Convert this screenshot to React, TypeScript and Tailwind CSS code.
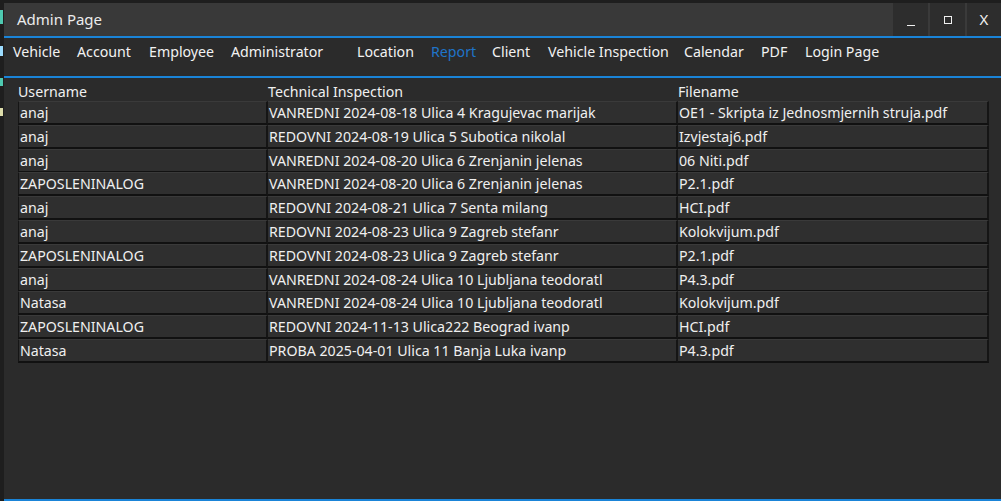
import { useState } from "react";

const navItems = [
  { label: "Vehicle", w: 64 },
  { label: "Account", w: 72 },
  { label: "Employee", w: 82 },
  { label: "Administrator", w: 126 },
  { label: "Location", w: 74 },
  { label: "Report", w: 61 },
  { label: "Client", w: 56 },
  { label: "Vehicle Inspection", w: 136 },
  { label: "Calendar", w: 77 },
  { label: "PDF", w: 44 },
  { label: "Login Page", w: 90 },
];

const rows = [
  ["anaj", "VANREDNI 2024-08-18 Ulica 4 Kragujevac marijak", "OE1 - Skripta iz Jednosmjernih struja.pdf"],
  ["anaj", "REDOVNI 2024-08-19 Ulica 5 Subotica nikolal", "Izvjestaj6.pdf"],
  ["anaj", "VANREDNI 2024-08-20 Ulica 6 Zrenjanin jelenas", "06 Niti.pdf"],
  ["ZAPOSLENINALOG", "VANREDNI 2024-08-20 Ulica 6 Zrenjanin jelenas", "P2.1.pdf"],
  ["anaj", "REDOVNI 2024-08-21 Ulica 7 Senta milang", "HCI.pdf"],
  ["anaj", "REDOVNI 2024-08-23 Ulica 9 Zagreb stefanr", "Kolokvijum.pdf"],
  ["ZAPOSLENINALOG", "REDOVNI 2024-08-23 Ulica 9 Zagreb stefanr", "P2.1.pdf"],
  ["anaj", "VANREDNI 2024-08-24 Ulica 10 Ljubljana teodoratl", "P4.3.pdf"],
  ["Natasa", "VANREDNI 2024-08-24 Ulica 10 Ljubljana teodoratl", "Kolokvijum.pdf"],
  ["ZAPOSLENINALOG", "REDOVNI 2024-11-13 Ulica222 Beograd ivanp", "HCI.pdf"],
  ["Natasa", "PROBA 2025-04-01 Ulica 11 Banja Luka ivanp", "P4.3.pdf"],
];

const cols = "grid-cols-[250px_410px_311px]";

export default function App() {
  const [active, setActive] = useState("Report");
  return (
    <div
      className="flex h-[501px] w-[1001px] overflow-hidden bg-[#1e1e1e] text-[#f0f0f0]"
      style={{ fontFamily: '"Noto Sans", "Open Sans", sans-serif' }}
    >
      {/* editor peeking out behind the window */}
      <div className="flex w-[4px] flex-col gap-[22px] pt-[10px]">
        <div className="h-[14px] w-[3px] bg-[#4ec9b0]" />
        <div className="h-[10px] w-[3px] bg-[#9cdcfe]" />
        <div className="h-[8px] w-[3px] bg-[#4ec9b0]" />
        <div className="h-[8px] w-[3px] bg-[#dcdcaa]" />
      </div>

      <div className="flex flex-1 flex-col pt-[3px]">
        {/* title bar */}
        <div className="flex h-[35px] items-center border-b-2 border-[#1a84d8] bg-[#393939]">
          <span className="flex-1 pl-[13px] text-[15px] text-[#ececec]">Admin Page</span>
          <div className="flex h-full gap-[2px] bg-[#3a3a3a]">
            <button className="flex h-full w-[35px] items-end justify-center bg-[#2d2d2d] pb-[10px]">
              <span className="block h-[1px] w-[8px] bg-[#f0f0f0]" />
            </button>
            <button className="flex h-full w-[35px] items-center justify-center bg-[#2d2d2d]">
              <span className="block h-[8px] w-[8px] border border-[#f0f0f0]" />
            </button>
            <button className="flex h-full w-[34px] items-center justify-center bg-[#2d2d2d] text-[15px]">
              X
            </button>
          </div>
        </div>

        {/* navigation */}
        <div className="flex h-[40px] items-start border-b-2 border-[#1a84d8] bg-[#2b2b2b] pl-[9px] pt-[4px]">
          {navItems.map((n) => (
            <button
              key={n.label}
              onClick={() => setActive(n.label)}
              style={{ width: n.w }}
              className={`text-left text-[14.2px] leading-[20px] ${
                active === n.label ? "text-[#1f74c9]" : "text-[#f2f2f2]"
              }`}
            >
              {n.label}
            </button>
          ))}
        </div>

        {/* data grid */}
        <div className="flex-1 border-b-2 border-[#1a84d8] bg-[#2b2b2b] pl-[14px] pt-[4px]">
          <div className={`grid ${cols} h-[19px] text-[14.2px] leading-[19px]`}>
            <span>Username</span>
            <span>Technical Inspection</span>
            <span>Filename</span>
          </div>
          {rows.map((r, i) => (
            <div key={i} className={`grid ${cols} h-[23.8px] text-[14.2px]`}>
              {r.map((c, j) => (
                <div
                  key={j}
                  className={`border-b-2 border-t border-[#111111] border-t-[#3a3a3a] bg-[#2f2f2f] pl-[1px] pt-[1px] leading-[20px] ${
                    j === 0 ? "border-l" : ""
                  } border-r-2 border-r-[#151515] border-l-[#151515]`}
                >
                  {c}
                </div>
              ))}
            </div>
          ))}
        </div>
      </div>
    </div>
  );
}
